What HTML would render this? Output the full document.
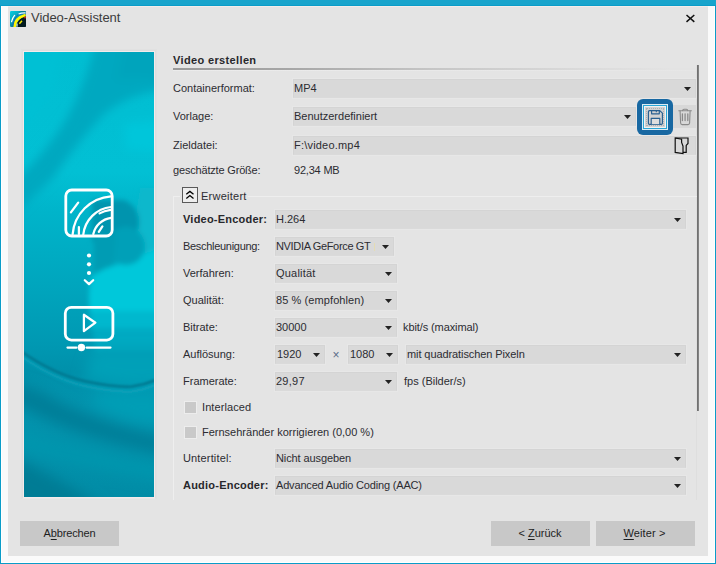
<!DOCTYPE html><html lang="de"><head><meta charset="utf-8"><title>Video-Assistent</title><style>
*{margin:0;padding:0;box-sizing:border-box}
html,body{width:716px;height:564px;overflow:hidden;background:#18a4cc}
body{position:relative;font-family:"Liberation Sans",sans-serif;font-size:11px;color:#333}
.abs{position:absolute}
.frame{left:0;top:5px;width:716px;height:559px;background:#0a9cc8}
.inner{left:1px;top:6px;width:714px;height:557px;background:#fafafa;border:1px solid #fff;border-top:none}
.content{left:8px;top:6px;width:700px;height:550px;background:#e4e4e4;border-top:1px solid #f3ecea}
.t{position:absolute;white-space:nowrap;line-height:13px;height:13px;font-size:11px;color:#2c2c32}
.b{font-weight:bold;color:#28282c}
.cb{position:absolute;height:19px;background:#d9d9d9;border:1px solid #d4d4d4;border-bottom:1px solid #dadada;box-shadow:0 0 0 1px rgba(255,255,255,0.12)}
.cb .t{left:0px;top:2px}
.cb svg.ar{position:absolute;right:4px;top:7px;width:7px;height:4px}
.btn{position:absolute;top:521px;height:25px;background:#c8c8c8;text-align:center;line-height:25px;font-size:11px;color:#1e1e1e}
.btn span{display:inline-block}
u{text-decoration:underline;text-decoration-thickness:1px;text-underline-offset:1.5px}
.chk{position:absolute;width:13px;height:13px;background:#c9c9c9;border:1px solid #ededed}
</style></head><body>
<div class="abs frame"></div><div class="abs inner"></div><div class="abs content"></div>
<svg class="abs" style="left:10px;top:11px" width="16" height="16" viewBox="0 0 16 16">
<defs><linearGradient id="ig" x1="0" y1="0" x2="0.9" y2="1"><stop offset="0" stop-color="#04d0e4"/><stop offset="0.45" stop-color="#0a9cb4"/><stop offset="1" stop-color="#063c48"/></linearGradient>
<clipPath id="ic"><rect x="0" y="0" width="16" height="16" rx="1.2"/></clipPath></defs>
<g clip-path="url(#ic)">
<rect x="0" y="0" width="16" height="16" fill="url(#ig)"/>
<path d="M9 0 L16 0 L16 3 Q12 1.6 9 0 Z" fill="#087c94"/>
<path d="M16.5 5.2 A11 11 0 0 0 6.4 16.5 L16.5 16.5 Z" fill="#021a20"/>
<path d="M3 15 Q3.4 8 8.4 3.4" stroke="#1464c0" stroke-width="1" fill="none"/>
<path d="M1.6 10.6 Q2.6 6.6 4.6 4.4" stroke="#fff" stroke-width="1.3" fill="none" stroke-linecap="round"/>
<path d="M8.2 4 Q11.5 2.4 16 2.8" stroke="#1a6cc4" stroke-width="1" fill="none"/>
<path d="M4.7 16 Q4.6 7.2 15.6 4.1" stroke="#fff800" stroke-width="2.6" fill="none"/>
<path d="M8.6 3 Q11.6 1.6 15.6 1.9" stroke="#e8fcff" stroke-width="1.2" fill="none"/>
<path d="M9.4 12.8 L12 9.7" stroke="#f4ec00" stroke-width="1.5" fill="none"/>
<circle cx="15" cy="6.6" r="1" fill="#d01c1c"/>
<path d="M7 15.8 L7.1 12.6" stroke="#d8f8ff" stroke-width="1.1" fill="none"/>
</g>
</svg>
<div class="t" style="left:31px;top:9px;font-size:13px;line-height:18px;height:18px;color:#3c3c3c;letter-spacing:-0.05px">Video-Assistent</div>
<svg class="abs" style="left:686px;top:14px" width="9" height="9" viewBox="0 0 9 9"><path d="M0.5 1 L8.3 7.9 M8.3 1 L0.5 7.9" stroke="#111" stroke-width="1.5" fill="none"/></svg>
<div class="abs" style="left:21px;top:49px;width:136px;height:450px;background:#e1e1e1"></div><div class="abs" style="left:22px;top:50px;width:134px;height:449px;background:#f3ebeb;border:1px solid #dedede;border-bottom-color:#eae8e8"></div>
<svg class="abs" style="left:24px;top:52px" width="130" height="445" viewBox="0 0 130 445">
<defs>
<filter id="b8" x="-40%" y="-40%" width="180%" height="180%"><feGaussianBlur stdDeviation="7"/></filter>
<filter id="b5" x="-40%" y="-40%" width="180%" height="180%"><feGaussianBlur stdDeviation="5"/></filter>
<filter id="b3" x="-40%" y="-40%" width="180%" height="180%"><feGaussianBlur stdDeviation="2.5"/></filter>
<filter id="b1" x="-40%" y="-40%" width="180%" height="180%"><feGaussianBlur stdDeviation="1"/></filter>
<linearGradient id="bg" x1="0" y1="0" x2="0" y2="445" gradientUnits="userSpaceOnUse">
<stop offset="0" stop-color="#00bed2"/><stop offset="0.27" stop-color="#02c0d4"/><stop offset="0.36" stop-color="#00b4ca"/><stop offset="0.54" stop-color="#00a4bc"/><stop offset="0.66" stop-color="#0098b2"/><stop offset="0.72" stop-color="#0090aa"/><stop offset="0.8" stop-color="#0294ae"/><stop offset="1" stop-color="#018ca6"/></linearGradient>
<clipPath id="cp"><rect x="0" y="0" width="130" height="445"/></clipPath>
</defs>
<g clip-path="url(#cp)">
<rect x="0" y="0" width="130" height="445" fill="url(#bg)"/>
<g filter="url(#b5)">
<path d="M72 -10 L140 -10 L140 38 Q104 42 80 62 Q52 92 30 125 L-6 160 L-6 126 Q24 98 44 64 Q62 30 72 -10 Z" fill="#00a8c0"/>
<path d="M100 -10 L140 -10 L140 30 Q116 24 92 28 Z" fill="#00a4bc"/>
<path d="M100 72 L140 68 L140 100 L102 98 Z" fill="#00c6da"/>
<path d="M-10 -10 L40 -10 L30 40 L-10 90 Z" fill="#00c0d4"/>
</g>
<g filter="url(#b3)">
<path d="M116 136 L140 136 L140 162 L112 160 Z" fill="#08b8cc"/>
<path d="M108 160 L140 158 L140 200 L100 214 Z" fill="#0cb8cc"/>
<path d="M68 224 Q80 216 93 213 Q112 206 140 194 L140 260 L66 260 Q63 240 68 224 Z" fill="#00c8da"/>
<path d="M66 259 L140 259 L140 276 L67 276 Z" fill="#00b8ce"/>
<path d="M68 276 L140 276 L140 300 L72 300 Z" fill="#00aac2"/>
<path d="M68 148 L100 148 Q117 156 115 174 Q110 192 92 194 L68 190 Z" fill="#0094ae"/>
<circle cx="102" cy="194" r="19" fill="#02a0b8"/>
<path d="M70 180 L92 182 L90 213 Q80 216 70 222 Z" fill="#029cb4"/>
</g>
<g filter="url(#b8)">
<path d="M70 296 L150 296 L150 332 Q100 338 60 326 Z" fill="#06a0b8"/>
<path d="M-10 330 L18 340 Q64 368 140 385 L140 402 Q64 388 10 362 L-10 352 Z" fill="#007e98"/>
<path d="M-10 378 Q55 398 140 412 L140 430 Q55 414 -10 396 Z" fill="#0496ae"/>
<path d="M-10 405 Q40 430 80 455 L-10 455 Z" fill="#007c94"/>
<path d="M70 340 L140 340 L140 372 Q100 372 70 352 Z" fill="#069eb6"/>
</g>
<g filter="url(#b1)" fill="none">
<path d="M-2 300 Q30 322 60 329 Q90 335.5 108 334.5 Q120 333 132 328" stroke="#007890" stroke-width="2.5"/>
<path d="M-2 305 Q30 327 60 334 Q90 340.5 108 339.5 Q120 338 132 333" stroke="#0aa2ba" stroke-width="3" opacity="0.7"/>
</g>
</g>
</svg>
<svg class="abs" style="left:54px;top:176px" width="70" height="190" viewBox="54 176 70 190" fill="none" stroke="#fff" stroke-linecap="round" stroke-linejoin="round">
<rect x="65.8" y="190" width="46.4" height="46" rx="6" stroke-width="2.8"/>
<g stroke-width="2.25">
<path d="M72.6 234.5 A41.5 41.5 0 0 1 111 196.3"/>
<path d="M83.3 234.5 A31 31 0 0 1 111 207"/>
<path d="M93.3 234 A21 21 0 0 1 111 217.8"/>
<path d="M99.6 213.4 Q104 210.8 110.6 209.8"/>
<path d="M70.9 212.4 L78.2 202.6"/>
<path d="M78.9 227 L78.9 234"/>
<path d="M98.8 231.8 L102.4 226.4"/>
<path d="M84.8 280.2 L89 284.1 L93.2 280.2"/>
<path d="M83.9 314.8 L83.9 331.2 L95.4 322.7 Z"/>
<path d="M67.5 347.5 L76.5 347.5 M86.5 347.5 L110.5 347.5"/>
</g>
<g fill="#fff" stroke="none">
<circle cx="89" cy="255.5" r="2.1"/><circle cx="89" cy="264.3" r="2.1"/><circle cx="89" cy="273" r="2.1"/>
<circle cx="81.4" cy="347.5" r="3.7"/>
</g>
<rect x="65.3" y="307.3" width="47.6" height="32.8" rx="6" stroke-width="2.8"/>
</svg>
<div class="t b" style="left:173px;top:54px;letter-spacing:0.36px">Video erstellen</div>
<div class="abs" style="left:173px;top:68px;width:524px;height:2px;background:linear-gradient(to right,#9a9a9a 0,#a6a6a6 22%,#c6c6c6 50%,#dadada 78%,#e3e3e3 95%)"></div>
<div class="abs" style="left:173px;top:70px;width:524px;height:1px;background:linear-gradient(to right,#ececec,#e6e6e6)"></div>
<div class="abs" style="left:696px;top:65px;width:1px;height:435px;background:#dedede"></div>
<div class="abs" style="left:697px;top:65px;width:2px;height:346px;background:linear-gradient(to right,#686868,#8c8c8c)"></div>
<div class="t" style="left:173px;top:82px">Containerformat:</div>
<div class="cb" style="left:293px;top:79px;width:403px"><div class="t">MP4</div><svg class="ar" viewBox="0 0 7 4"><path d="M0 0 L7 0 L3.5 4 Z" fill="#222"/></svg></div>
<div class="t" style="left:173px;top:110px">Vorlage:</div>
<div class="cb" style="left:293px;top:107px;width:343px"><div class="t">Benutzerdefiniert</div><svg class="ar" viewBox="0 0 7 4"><path d="M0 0 L7 0 L3.5 4 Z" fill="#222"/></svg></div>
<div class="t" style="left:173px;top:139px">Zieldatei:</div>
<div class="cb" style="left:293px;top:136px;width:403px"><div class="t" style="letter-spacing:0.2px;">F:\video.mp4</div></div>
<div class="t" style="left:173px;top:164px;letter-spacing:-0.18px">geschätzte Größe:</div>
<div class="t" style="left:294px;top:164px;letter-spacing:-0.2px">92,34 MB</div>
<div class="abs" style="left:673px;top:105px;width:23px;height:23px;background:#d8d8d8"></div>
<div class="abs" style="left:637px;top:99px;width:36px;height:36px;border-radius:6px;background:#1868a2"></div>
<div class="abs" style="left:642px;top:104px;width:26px;height:26px;background:#dcecf4"></div>
<div class="abs" style="left:643px;top:105px;width:24px;height:24px;background:#d2d2d2;border:1px solid #2aa6d6;box-shadow:inset 0 0 0 1px rgba(255,255,255,0.7)"></div>
<div class="abs" style="left:646px;top:108px;width:18px;height:18px;border:1px dotted #b0b0b0"></div>
<svg class="abs" style="left:647px;top:109px" width="17" height="17" viewBox="647 109 17 17" fill="none" stroke="#285f90" stroke-width="1.15" stroke-linejoin="round">
<path d="M649.6 110.6 L659.8 110.6 L662.4 113.2 L662.4 123.2 Q662.4 124.4 661.2 124.4 L649.6 124.4 Q648.4 124.4 648.4 123.2 L648.4 111.8 Q648.4 110.6 649.6 110.6 Z"/>
<path d="M651.6 110.8 L651.6 113.8 L659.3 113.8 L659.3 110.8"/>
<path d="M651.2 124.2 L651.2 118.4 L659.8 118.4 L659.8 124.2" fill="#dedede"/>
<path d="M656.3 110.8 L656.3 112.2" stroke-width="1.1"/>
</svg>
<svg class="abs" style="left:677px;top:107px" width="17" height="20" viewBox="677 107 17 20" fill="none" stroke="#8a8a8a" stroke-width="1.1" stroke-linecap="round" stroke-linejoin="round">
<path d="M678.8 110.8 L691.4 110.8"/>
<path d="M682.6 110.6 Q682.8 109.3 684 109.3 L686.4 109.3 Q687.6 109.3 687.8 110.6"/>
<path d="M680.1 111 L680.6 123 Q680.7 124.6 682.2 124.6 L688 124.6 Q689.5 124.6 689.6 123 L690.1 111"/>
<path d="M682.4 113.8 L682.4 120.6 M685.1 113.8 L685.1 120.6 M687.8 113.8 L687.8 120.6" stroke-width="1.3"/>
</svg>
<svg class="abs" style="left:673px;top:136px" width="18" height="19" viewBox="673 136 18 19" fill="none" stroke="#111" stroke-width="1.2" stroke-linejoin="miter">
<path d="M675.2 138 L688 138 L688 143.4 L686.2 145.4 L686.2 152.4 L683 152.4"/>
<path d="M675.2 138 L681.6 139.2 L681.6 142.4 L683 146 L683 153.6 L675.2 152.4 Z"/>
</svg>
<div class="abs" style="left:173px;top:196px;width:524px;height:304px;border:1px solid #eeeeee;border-right:none;border-bottom:none"></div>
<div class="abs" style="left:180px;top:190px;width:68px;height:14px;background:#e4e4e4"></div>
<div class="abs" style="left:182px;top:187px;width:16px;height:16px;background:#eeeeee;border:1px solid #5a5a5a"></div>
<svg class="abs" style="left:185px;top:190px" width="10" height="10" viewBox="185 190 10 10" fill="none" stroke="#000" stroke-width="1.3"><path d="M186.3 194.2 L189.9 191.4 L193.5 194.2 M186.3 198.4 L189.9 195.6 L193.5 198.4"/></svg>
<div class="t" style="left:201px;top:190px;letter-spacing:0.25px">Erweitert</div>
<div class="t b" style="left:183px;top:213px;letter-spacing:0.22px">Video-Encoder:</div>
<div class="cb" style="left:275px;top:210px;width:411px"><div class="t">H.264</div><svg class="ar" viewBox="0 0 7 4"><path d="M0 0 L7 0 L3.5 4 Z" fill="#222"/></svg></div>
<div class="t" style="left:183px;top:240px;letter-spacing:-0.3px">Beschleunigung:</div>
<div class="cb" style="left:275px;top:237px;width:119px"><div class="t" style="letter-spacing:-0.34px;">NVIDIA GeForce GT</div><svg class="ar" viewBox="0 0 7 4"><path d="M0 0 L7 0 L3.5 4 Z" fill="#222"/></svg><div class="abs" style="left:98px;top:5px;width:1px;height:8px;background:#e4dcb4"></div></div>
<div class="t" style="left:183px;top:267px">Verfahren:</div>
<div class="cb" style="left:275px;top:264px;width:122px"><div class="t" style="letter-spacing:0.2px;">Qualität</div><svg class="ar" viewBox="0 0 7 4"><path d="M0 0 L7 0 L3.5 4 Z" fill="#222"/></svg></div>
<div class="t" style="left:183px;top:294px">Qualität:</div>
<div class="cb" style="left:275px;top:291px;width:122px"><div class="t" style="letter-spacing:0.09px;">85 % (empfohlen)</div><svg class="ar" viewBox="0 0 7 4"><path d="M0 0 L7 0 L3.5 4 Z" fill="#222"/></svg></div>
<div class="t" style="left:183px;top:321px">Bitrate:</div>
<div class="cb" style="left:275px;top:318px;width:122px"><div class="t">30000</div><svg class="ar" viewBox="0 0 7 4"><path d="M0 0 L7 0 L3.5 4 Z" fill="#222"/></svg></div>
<div class="t" style="left:403px;top:321px;letter-spacing:-0.1px">kbit/s (maximal)</div>
<div class="t" style="left:183px;top:348px">Auflösung:</div>
<div class="cb" style="left:275px;top:345px;width:50px"><div class="t" style="left:1px;">1920</div><svg class="ar" viewBox="0 0 7 4"><path d="M0 0 L7 0 L3.5 4 Z" fill="#222"/></svg></div>
<div class="t" style="left:332.5px;top:346.5px;font-size:12px;color:#5a6c88;line-height:16px;height:16px">×</div>
<div class="cb" style="left:348px;top:345px;width:50px"><div class="t" style="left:1px;">1080</div><svg class="ar" viewBox="0 0 7 4"><path d="M0 0 L7 0 L3.5 4 Z" fill="#222"/></svg></div>
<div class="cb" style="left:406px;top:345px;width:280px"><div class="t" style="letter-spacing:-0.09px;">mit quadratischen Pixeln</div><svg class="ar" viewBox="0 0 7 4"><path d="M0 0 L7 0 L3.5 4 Z" fill="#222"/></svg></div>
<div class="t" style="left:183px;top:375px">Framerate:</div>
<div class="cb" style="left:275px;top:372px;width:122px"><div class="t" style="letter-spacing:0.25px;">29,97</div><svg class="ar" viewBox="0 0 7 4"><path d="M0 0 L7 0 L3.5 4 Z" fill="#222"/></svg></div>
<div class="t" style="left:404px;top:375px">fps (Bilder/s)</div>
<div class="chk" style="left:184px;top:401px"></div>
<div class="t" style="left:202px;top:401px;letter-spacing:0.1px">Interlaced</div>
<div class="chk" style="left:184px;top:426px"></div>
<div class="t" style="left:202px;top:426px">Fernsehränder korrigieren (0,00 %)</div>
<div class="t" style="left:183px;top:452px;letter-spacing:0.15px">Untertitel:</div>
<div class="cb" style="left:275px;top:449px;width:411px"><div class="t" style="letter-spacing:-0.1px;">Nicht ausgeben</div><svg class="ar" viewBox="0 0 7 4"><path d="M0 0 L7 0 L3.5 4 Z" fill="#222"/></svg></div>
<div class="t b" style="left:183px;top:479px;letter-spacing:0.22px">Audio-Encoder:</div>
<div class="cb" style="left:275px;top:476px;width:411px"><div class="t" style="letter-spacing:-0.17px;">Advanced Audio Coding (AAC)</div><svg class="ar" viewBox="0 0 7 4"><path d="M0 0 L7 0 L3.5 4 Z" fill="#222"/></svg></div>
<div class="abs" style="left:160px;top:500px;width:540px;height:19px;background:#e4e4e4"></div>

<div class="btn" style="left:20px;width:99px"><span style="letter-spacing:-0.15px">A<u>b</u>brechen</span></div>
<div class="btn" style="left:491px;width:99px"><span style="position:relative;left:-0.5px">&lt; <u>Z</u>urück</span></div>
<div class="btn" style="left:596px;width:99px"><span style="position:relative;left:-1px;letter-spacing:0.1px"><u>W</u>eiter &gt;</span></div>
</body></html>
